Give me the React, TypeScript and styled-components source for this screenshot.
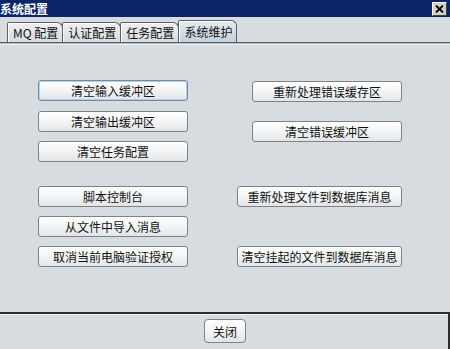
import styled, { createGlobalStyle } from "styled-components";

const Global = createGlobalStyle`
  body {
    margin: 0;
    background: #d6dcdf;
    font-family: "Noto Sans CJK SC", "Liberation Sans", sans-serif;
  }
`;

const Window = styled.div`
  width: 450px;
  height: 349px;
  display: flex;
  flex-direction: column;
  background: #d6dcdf;
  overflow: hidden;
`;

const TitleBar = styled.div`
  height: 17px;
  background: #0b246a;
  display: flex;
  align-items: center;
  justify-content: space-between;
  padding-right: 3px;
`;

const Title = styled.span`
  color: #ffffff;
  font-size: 12px;
  font-weight: bold;
  line-height: 17px;
`;

const CloseBox = styled.div`
  width: 13px;
  height: 12px;
  background: #d4d0c8;
  border: 1px solid;
  border-color: #ffffff #404040 #404040 #ffffff;
  display: flex;
  align-items: center;
  justify-content: center;
`;

const TabStrip = styled.div`
  height: 25px;
  display: flex;
  align-items: flex-end;
  padding-left: 7px;
  border-bottom: 1px solid #5b6064;
  box-shadow: 0 1px 0 #aebdcb, 0 2px 0 #eef2f5;
`;

const Tab = styled.div<{ $active?: boolean }>`
  height: ${(p) => (p.$active ? 21 : 19)}px;
  padding: 0 4px 0 5px;
  border: 1px solid #5b6064;
  border-bottom: none;
  border-top-right-radius: 6px;
  border-top-left-radius: 2px;
  margin-right: -1px;
  font-size: 12px;
  color: #111;
  display: flex;
  align-items: center;
  box-shadow: inset 1px 1px 0 #ffffff;
  background: ${(p) =>
    p.$active
      ? "linear-gradient(#e6edf3, #c3d0da)"
      : "linear-gradient(#eef0f1, #d6dcdf)"};
`;

const Content = styled.div`
  flex: 1;
  display: flex;
  padding: 0 0 0 38px;
  gap: 49px;
`;

const Column = styled.div<{ $top: number; $width: number }>`
  width: ${(p) => p.$width}px;
  padding-top: ${(p) => p.$top}px;
  display: flex;
  flex-direction: column;
  align-items: flex-end;
`;

const Group = styled.div<{ $gap: number; $top?: number }>`
  display: flex;
  flex-direction: column;
  align-items: flex-end;
  gap: ${(p) => p.$gap}px;
  margin-top: ${(p) => p.$top ?? 0}px;
  width: 100%;
`;

const Button = styled.button<{ $width?: number; $focus?: boolean }>`
  width: ${(p) => p.$width ?? 150}px;
  height: 21px;
  padding: 0;
  border: 1px solid ${(p) => (p.$focus ? "#6f8bab" : "#7d8286")};
  border-radius: 3px;
  background: linear-gradient(#ffffff, #f3f4f5 50%, #e2e5e7);
  box-shadow: ${(p) => (p.$focus ? "inset 0 0 0 1px #b9cde2" : "none")};
  font-family: "Noto Sans CJK SC", "Liberation Sans", sans-serif;
  font-size: 12px;
  color: #111;
  line-height: 19px;
  cursor: pointer;
`;

const Footer = styled.div`
  border-top: 2px solid #2a2e30;
  border-right: 2px solid #2a2e30;
  box-shadow: inset 0 1px 0 #eef2f5;
  display: flex;
  justify-content: center;
  padding-top: 5px;
  padding-left: 2px;
  box-sizing: border-box;
  height: 37px;
`;

const CloseButton = styled(Button)`
  height: 24px;
  border-radius: 4px;
`;

export default function App() {
  return (
    <>
      <Global />
      <Window>
        <TitleBar>
          <Title>系统配置</Title>
          <CloseBox>
            <svg width="9" height="8" viewBox="0 0 9 8">
              <path d="M1 0.5 L8 7.5 M8 0.5 L1 7.5" stroke="#000" strokeWidth="1.8" />
            </svg>
          </CloseBox>
        </TitleBar>
        <TabStrip>
          <Tab>MQ 配置</Tab>
          <Tab>认证配置</Tab>
          <Tab>任务配置</Tab>
          <Tab $active>系统维护</Tab>
        </TabStrip>
        <Content>
          <Column $top={37} $width={150}>
            <Group $gap={9.5}>
              <Button $focus>清空输入缓冲区</Button>
              <Button>清空输出缓冲区</Button>
              <Button>清空任务配置</Button>
            </Group>
            <Group $gap={9} $top={24}>
              <Button>脚本控制台</Button>
              <Button>从文件中导入消息</Button>
              <Button>取消当前电脑验证授权</Button>
            </Group>
          </Column>
          <Column $top={38} $width={165}>
            <Group $gap={19}>
              <Button>重新处理错误缓存区</Button>
              <Button>清空错误缓冲区</Button>
            </Group>
            <Group $gap={39} $top={44}>
              <Button $width={165}>重新处理文件到数据库消息</Button>
              <Button $width={165}>清空挂起的文件到数据库消息</Button>
            </Group>
          </Column>
        </Content>
        <Footer>
          <CloseButton $width={42}>关闭</CloseButton>
        </Footer>
      </Window>
    </>
  );
}
